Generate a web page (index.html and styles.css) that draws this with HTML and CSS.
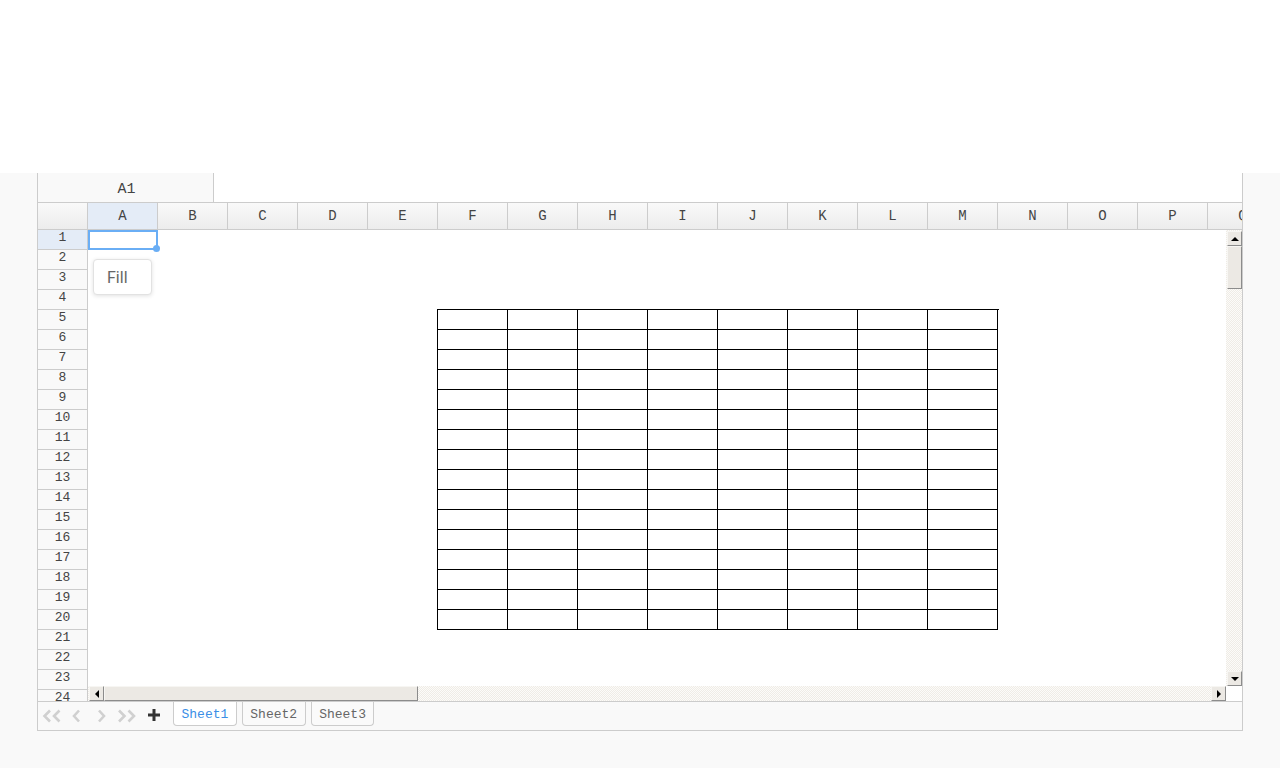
FILE: index.html
```html
<!DOCTYPE html>
<html lang="en">
<head>
<meta charset="utf-8">
<title>Spreadsheet</title>
<link rel="stylesheet" href="styles.css">
</head>
<body>
<div class="topbar"></div>
<div class="book">
  <div class="formula">
    <div class="namebox">A1</div>
    <div class="fx"></div>
  </div>
  <div class="colhead">
    <div class="corner"></div>
    <div class="col sel">A</div><div class="col">B</div><div class="col">C</div><div class="col">D</div><div class="col">E</div><div class="col">F</div><div class="col">G</div><div class="col">H</div><div class="col">I</div><div class="col">J</div><div class="col">K</div><div class="col">L</div><div class="col">M</div><div class="col">N</div><div class="col">O</div><div class="col">P</div><div class="col">Q</div>
  </div>
  <div class="main">
    <div class="rowheads">
      <div class="rowh sel">1</div><div class="rowh">2</div><div class="rowh">3</div><div class="rowh">4</div><div class="rowh">5</div><div class="rowh">6</div><div class="rowh">7</div><div class="rowh">8</div><div class="rowh">9</div><div class="rowh">10</div><div class="rowh">11</div><div class="rowh">12</div><div class="rowh">13</div><div class="rowh">14</div><div class="rowh">15</div><div class="rowh">16</div><div class="rowh">17</div><div class="rowh">18</div><div class="rowh">19</div><div class="rowh">20</div><div class="rowh">21</div><div class="rowh">22</div><div class="rowh">23</div><div class="rowh">24</div>
    </div>
    <div class="sheet">
      <div class="content">
        <div class="tbl">
          <div></div><div></div><div></div><div></div><div></div><div></div><div></div><div></div>
          <div></div><div></div><div></div><div></div><div></div><div></div><div></div><div></div>
          <div></div><div></div><div></div><div></div><div></div><div></div><div></div><div></div>
          <div></div><div></div><div></div><div></div><div></div><div></div><div></div><div></div>
          <div></div><div></div><div></div><div></div><div></div><div></div><div></div><div></div>
          <div></div><div></div><div></div><div></div><div></div><div></div><div></div><div></div>
          <div></div><div></div><div></div><div></div><div></div><div></div><div></div><div></div>
          <div></div><div></div><div></div><div></div><div></div><div></div><div></div><div></div>
          <div></div><div></div><div></div><div></div><div></div><div></div><div></div><div></div>
          <div></div><div></div><div></div><div></div><div></div><div></div><div></div><div></div>
          <div></div><div></div><div></div><div></div><div></div><div></div><div></div><div></div>
          <div></div><div></div><div></div><div></div><div></div><div></div><div></div><div></div>
          <div></div><div></div><div></div><div></div><div></div><div></div><div></div><div></div>
          <div></div><div></div><div></div><div></div><div></div><div></div><div></div><div></div>
          <div></div><div></div><div></div><div></div><div></div><div></div><div></div><div></div>
          <div></div><div></div><div></div><div></div><div></div><div></div><div></div><div></div>
        </div>
        <div class="selection"></div>
        <div class="handle"></div>
        <div class="popup">Fill</div>
      </div>
      <div class="vscroll">
        <div class="sbtn"><span class="tri up"></span></div>
        <div class="vthumb"></div>
        <div class="sbtn bottom"><span class="tri down"></span></div>
      </div>
      <div class="hscroll">
        <div class="sbtn"><span class="tri left"></span></div>
        <div class="hthumb"></div>
        <div class="sbtn end"><span class="tri right"></span></div>
      </div>
      <div class="scorner"></div>
    </div>
  </div>
  <div class="tabbar">
    <div class="nav">
      <svg class="ic first" width="22" height="16" viewBox="0 0 22 16"><path d="M9 2.5 L3.5 8 L9 13.5 M18.5 2.5 L13 8 L18.5 13.5" fill="none" stroke="#d0d0d0" stroke-width="2.6"/></svg>
      <svg class="ic prev" width="11" height="16" viewBox="0 0 11 16"><path d="M8 2.5 L3 8 L8 13.5" fill="none" stroke="#d0d0d0" stroke-width="2.6"/></svg>
      <svg class="ic next" width="11" height="16" viewBox="0 0 11 16"><path d="M3 2.5 L8 8 L3 13.5" fill="none" stroke="#d0d0d0" stroke-width="2.6"/></svg>
      <svg class="ic last" width="22" height="16" viewBox="0 0 22 16"><path d="M3 2.5 L8.5 8 L3 13.5 M12.5 2.5 L18 8 L12.5 13.5" fill="none" stroke="#d0d0d0" stroke-width="2.6"/></svg>
      <svg class="ic plus" width="14" height="16" viewBox="0 0 14 16"><path d="M7 2 V14 M1 8 H13" fill="none" stroke="#333" stroke-width="3"/></svg>
    </div>
    <div class="tab active">Sheet1</div>
    <div class="tab">Sheet2</div>
    <div class="tab">Sheet3</div>
  </div>
</div>
</body>
</html>
```
FILE: styles.css
```css
html, body {
  margin: 0;
  padding: 0;
}
body {
  background: #f9f9f9;
  font-family: "Liberation Mono", "DejaVu Sans Mono", monospace;
  color: #444;
}
.topbar {
  height: 173px;
  background: #fff;
}
.book {
  margin-left: 37px;
  width: 1206px;
  box-sizing: border-box;
  border: 1px solid #ccc;
  border-top: none;
  background: #fff;
}
.formula {
  display: flex;
  height: 29px;
}
.namebox {
  width: 176px;
  box-sizing: border-box;
  border-right: 1px solid #ccc;
  background: #f9f9f9;
  display: flex;
  align-items: center;
  justify-content: center;
  font-size: 15px;
  color: #444;
  padding: 3px 0 0 2px;
}
.fx {
  flex: 1;
  background: #fff;
}
.colhead {
  display: flex;
  height: 28px;
  box-sizing: border-box;
  border-top: 1px solid #ccc;
  border-bottom: 1px solid #ccc;
  overflow: hidden;
  background: linear-gradient(#f9f9f9, #ececec);
}
.corner {
  flex: 0 0 50px;
  box-sizing: border-box;
  border-right: 1px solid #ccc;
}
.col {
  flex: 0 0 70px;
  box-sizing: border-box;
  border-right: 1px solid #ccc;
  text-align: center;
  line-height: 26px;
  font-size: 14px;
  color: #444;
}
.col.sel {
  background: #e4ecf7;
}
.main {
  display: flex;
  height: 471px;
}
.rowheads {
  flex: 0 0 50px;
  box-sizing: border-box;
  border-right: 1px solid #ccc;
  background: #f9f9f9;
  overflow: hidden;
}
.rowh {
  height: 20px;
  box-sizing: border-box;
  border-bottom: 1px solid #ccc;
  text-align: center;
  font-size: 13px;
  line-height: 15px;
  color: #444;
}
.rowh.sel {
  background: #e4ecf7;
}
.sheet {
  flex: 1;
  display: grid;
  grid-template-columns: 1fr 16px;
  grid-template-rows: 1fr 15px;
}
.content {
  position: relative;
  overflow: hidden;
  background: #fff;
}
.tbl {
  margin: 79px 0 0 349px;
  width: 561px;
  display: grid;
  grid-template-columns: repeat(8, 70px);
  grid-auto-rows: 20px;
  border-left: 1px solid #000;
  border-top: 1px solid #000;
}
.tbl > div {
  border-right: 1px solid #000;
  border-bottom: 1px solid #000;
}
.selection {
  position: absolute;
  left: 0;
  top: 0;
  width: 70px;
  height: 20px;
  box-sizing: border-box;
  border: 2px solid #6aaef5;
}
.handle {
  position: absolute;
  left: 65px;
  top: 15px;
  width: 7px;
  height: 7px;
  border-radius: 50%;
  background: #6aaef5;
}
.popup {
  position: absolute;
  left: 5px;
  top: 29px;
  width: 59px;
  height: 36px;
  box-sizing: border-box;
  border: 1px solid #e2e2e2;
  border-radius: 4px;
  background: #fff;
  box-shadow: 0 1px 4px rgba(0, 0, 0, 0.12);
  font-family: Roboto, "Liberation Sans", sans-serif;
  font-size: 16px;
  color: #666;
  padding-left: 13px;
  line-height: 35px;
}
.vscroll {
  display: flex;
  flex-direction: column;
  padding: 1px 0 0 1px;
  box-sizing: border-box;
  background: repeating-conic-gradient(#efece6 0 25%, #fcfbf9 0 50%) 0 0 / 2px 2px;
}
.hscroll {
  display: flex;
  padding-left: 1px;
  background: repeating-conic-gradient(#efece6 0 25%, #fcfbf9 0 50%) 0 0 / 2px 2px;
}
.scorner {
  background: #fff;
}
.sbtn {
  flex: 0 0 auto;
  width: 15px;
  height: 15px;
  box-sizing: border-box;
  background: #ece9e4;
  border: 1px solid;
  border-color: #f7f6f3 #8c8c8c #8c8c8c #f7f6f3;
  display: flex;
  align-items: center;
  justify-content: center;
}
.sbtn.bottom {
  margin-top: auto;
}
.sbtn.end {
  margin-left: auto;
}
.vthumb {
  width: 15px;
  height: 43px;
  box-sizing: border-box;
  background: #ece9e4;
  border: 1px solid;
  border-color: #f7f6f3 #8c8c8c #8c8c8c #f7f6f3;
}
.hthumb {
  width: 314px;
  height: 15px;
  box-sizing: border-box;
  background: #ece9e4;
  border: 1px solid;
  border-color: #f7f6f3 #8c8c8c #8c8c8c #f7f6f3;
}
.tri {
  width: 0;
  height: 0;
  border: 4px solid transparent;
}
.tri.up {
  border-bottom-color: #000;
  border-top-width: 0;
}
.tri.down {
  border-top-color: #000;
  border-bottom-width: 0;
}
.tri.left {
  border-right-color: #000;
  border-left-width: 0;
}
.tri.right {
  border-left-color: #000;
  border-right-width: 0;
}
.tabbar {
  display: flex;
  align-items: flex-start;
  height: 29px;
  box-sizing: border-box;
  border-top: 1px solid #ccc;
  background: #f9f9f9;
}
.nav {
  display: flex;
  align-items: center;
  height: 28px;
  padding-left: 3px;
}
.ic {
  display: block;
}
.ic.prev {
  margin-left: 8px;
}
.ic.next {
  margin-left: 14px;
}
.ic.last {
  margin-left: 9px;
}
.ic.plus {
  margin-left: 9px;
  margin-top: -2px;
}
.tab {
  margin-left: 5px;
  padding: 2px 7.5px 0;
  line-height: 21px;
  font-size: 13px;
  color: #666;
  background: #fafafa;
  border: 1px solid #ccc;
  border-top: none;
  border-radius: 0 0 4px 4px;
}
.tab.active {
  margin-left: 12px;
  background: #fff;
  color: #3a8ee6;
}
```
